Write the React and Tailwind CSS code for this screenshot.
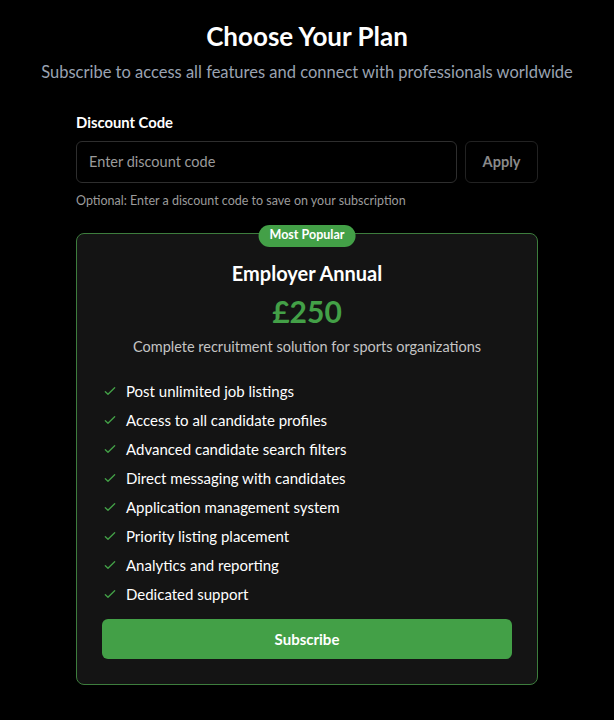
import React, { useState } from "react";

const features = [
  "Post unlimited job listings",
  "Access to all candidate profiles",
  "Advanced candidate search filters",
  "Direct messaging with candidates",
  "Application management system",
  "Priority listing placement",
  "Analytics and reporting",
  "Dedicated support",
];

const Check = () => (
  <svg className="w-4 h-4 text-[#43a047] flex-shrink-0" fill="none" stroke="currentColor" viewBox="0 0 24 24">
    <path strokeLinecap="round" strokeLinejoin="round" strokeWidth={2} d="M5 13l4 4L19 7" />
  </svg>
);

export default function App() {
  const [code, setCode] = useState("");

  return (
    <div className="min-h-screen bg-black text-white font-['Lato',sans-serif] pt-5 pb-8">
      {/* Header */}
      <div className="text-center">
        <h1 className="text-[26px] font-bold leading-8">Choose Your Plan</h1>
        <p className="mt-[8px] text-[16.5px] text-[#9aa3b2]">Subscribe to access all features and connect with professionals worldwide</p>
      </div>

      <div className="w-[462px] mx-auto mt-[26px]">
        {/* Discount */}
        <label className="block text-[14.8px] font-bold mb-[8px]">Discount Code</label>
        <div className="flex gap-2">
          <input
            value={code}
            onChange={e => setCode(e.target.value)}
            placeholder="Enter discount code"
            className="flex-1 h-[42px] px-3 bg-black border border-[#2e2e2e] rounded-md text-[14.5px] text-white placeholder:text-[#9b9b9b] focus:outline-none"
          />
          <button className="w-[73px] h-[42px] border border-[#222] rounded-md text-[14.5px] font-bold text-[#8a8a8a]">Apply</button>
        </div>
        <p className="mt-[9px] text-[12.5px] text-[#9b9b9b]">Optional: Enter a discount code to save on your subscription</p>

        {/* Plan card */}
        <div className="relative mt-[22px] bg-[#141414] border border-[#3d7d3d] rounded-lg px-[25px] pt-[25px] pb-[25px]">
          <span className="absolute -top-[9px] left-1/2 -translate-x-1/2 bg-[#43a047] text-white text-[12.5px] font-bold px-[11px] h-[22px] flex items-center rounded-full">Most Popular</span>
          <div className="text-center">
            <h2 className="text-[20px] font-bold leading-7">Employer Annual</h2>
            <p className="mt-[6px] text-[30px] font-bold text-[#43a047] leading-9">£250</p>
            <p className="mt-[7px] text-[14.5px] text-[#c4c4c4]">Complete recruitment solution for sports organizations</p>
          </div>
          <ul className="mt-[23px] space-y-[7px]">
            {features.map(f => (
              <li key={f} className="flex items-center gap-2 text-[15px] h-[22px]">
                <Check />
                <span>{f}</span>
              </li>
            ))}
          </ul>
          <button className="mt-[14px] w-full h-[40px] bg-[#43a047] rounded-md text-[15px] font-bold text-white">Subscribe</button>
        </div>
      </div>
    </div>
  );
}
